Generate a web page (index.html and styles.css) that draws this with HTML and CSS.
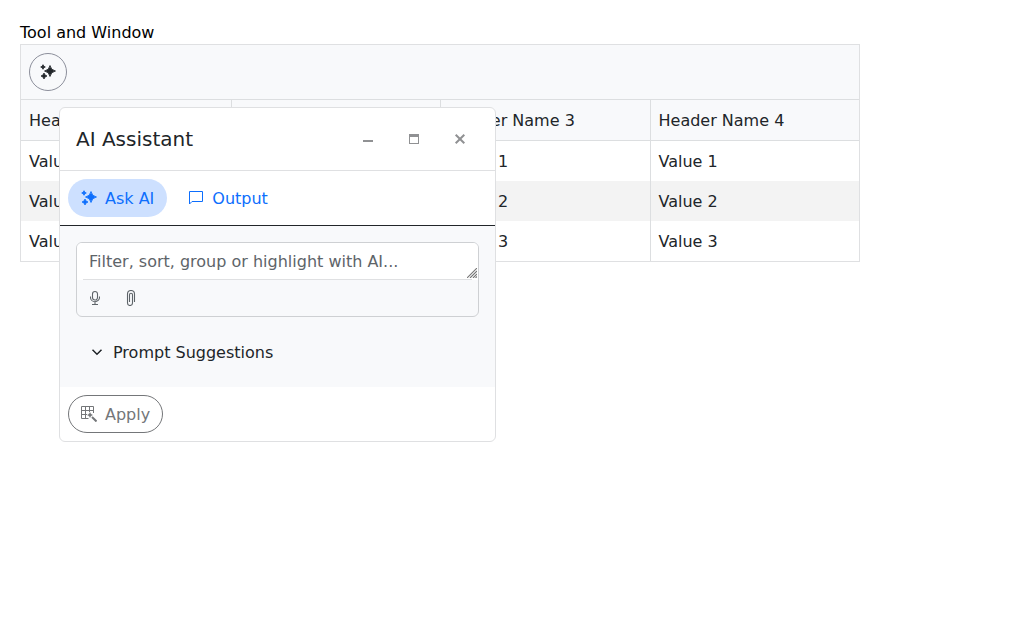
FILE: index.html
```html
<!DOCTYPE html>
<html lang="en">
<head>
<meta charset="utf-8">
<title>Tool and Window</title>
<link rel="stylesheet" href="styles.css">
</head>
<body>
<svg class="defs" width="0" height="0" aria-hidden="true">
  <symbol id="sparkles" viewBox="0 0 16 16"><path d="M10 1.5Q10.9 6.1 15.5 7Q10.9 7.9 10 12.5Q9.1 7.9 4.5 7Q9.1 6.1 10 1.5ZM3 .7Q3.4 2.6 5.3 3Q3.4 3.4 3 5.3Q2.6 3.4 .7 3Q2.6 2.6 3 .7ZM4 9Q4.5 11.5 7 12Q4.5 12.5 4 15Q3.5 12.5 1 12Q3.5 11.5 4 9Z" fill="currentColor" stroke="currentColor" stroke-width=".8"/></symbol>
</svg>
<div class="heading">Tool and Window</div>
<div class="grid">
  <div class="toolbar"><button class="btn btn-round" aria-label="AI Assistant"><svg class="icon"><use href="#sparkles"/></svg></button></div>
  <div class="row row-header"><div>Header Name 1</div><div>Header Name 2</div><div>Header Name 3</div><div>Header Name 4</div></div>
  <div class="row"><div>Value 1</div><div>Value 1</div><div>Value 1</div><div>Value 1</div></div>
  <div class="row row-alt"><div>Value 2</div><div>Value 2</div><div>Value 2</div><div>Value 2</div></div>
  <div class="row"><div>Value 3</div><div>Value 3</div><div>Value 3</div><div>Value 3</div></div>
</div>
<div class="window">
  <div class="titlebar">
    <div class="title">AI Assistant</div>
    <div class="actions">
      <svg class="icon" viewBox="0 0 16 16"><path d="M3 9h10v2H3z" fill="currentColor"/></svg>
      <svg class="icon" viewBox="0 0 16 16"><path d="M3 3h10v10H3zM4 6v6h8V6z" fill="currentColor" fill-rule="evenodd"/></svg>
      <svg class="icon" viewBox="0 0 16 16"><path d="M3.7 3.7l8.6 8.6M12.3 3.7l-8.6 8.6" stroke="currentColor" stroke-width="2"/></svg>
    </div>
  </div>
  <div class="tabs">
    <button class="btn btn-active"><svg class="icon"><use href="#sparkles"/></svg>Ask AI</button>
    <button class="btn btn-flat"><svg class="icon" viewBox="0 0 16 16"><path d="M1.5 14V1.5h13v10H4z" fill="none" stroke="currentColor"/></svg>Output</button>
  </div>
  <div class="content">
    <div class="prompt">
      <div class="prompt-text">Filter, sort, group or highlight with AI...
        <svg class="grip" viewBox="0 0 10 10"><path d="M0 10L10 0M3 10L10 3M6 10L10 6M8.5 10L10 8.5" stroke="#777" stroke-width="1.1"/></svg>
      </div>
      <div class="prompt-tools">
        <svg class="icon" viewBox="0 0 16 16"><path d="M5.5 4a2.5 2.5 0 0 1 5 0v3.5a2.5 2.5 0 0 1-5 0zM3.5 6.5v1a4.5 4.2 0 0 0 9 0v-1M8 11.7v2.8M5 14.5h6" fill="none" stroke="currentColor" stroke-width="1.1"/></svg>
        <svg class="icon" viewBox="0 0 16 16"><path d="M11.5 12V4a3.5 3.5 0 0 0-7 0v9a2.5 2.5 0 0 0 5 0V4.7a1.5 1.5 0 0 0-3 0V12" fill="none" stroke="currentColor" stroke-width="1.1"/></svg>
      </div>
    </div>
    <div class="suggestions"><svg class="icon" viewBox="0 0 16 16"><path d="M3.5 5.8L8 10.2l4.5-4.4" fill="none" stroke="currentColor" stroke-width="1.5"/></svg>Prompt Suggestions</div>
  </div>
  <div class="footer">
    <button class="btn btn-apply"><svg class="icon" viewBox="0 0 16 16"><path d="M7.5 12.5H.5V.5h12V7M.5 4.5h12M.5 8.5H6M4.5.5v12M8.5.5V6" fill="none" stroke="currentColor"/><path d="M11 11l4.5 4.5" stroke="currentColor" stroke-width="2"/><path d="M9 6.5L9.9 8.1L11.5 9L9.9 9.9L9 11.5L8.1 9.9L6.5 9L8.1 8.1Z" fill="currentColor" stroke="currentColor" stroke-width=".4"/></svg>Apply</button>
  </div>
</div>
</body>
</html>
```

FILE: styles.css
```css
* { box-sizing: border-box; }
body { margin: 0; padding: 20px; font: 16px/25px "DejaVu Sans", sans-serif; color: #212529; background: #fff; }
.defs { position: absolute; }
.heading { height: 24px; color: #000; }
.icon { display: block; width: 16px; height: 16px; flex: none; }
.btn { display: inline-flex; align-items: center; gap: 8px; height: 38px; padding: 0 12px; border: 1px solid transparent; border-radius: 19px; background: none; color: inherit; font: inherit; white-space: nowrap; }
.btn-round { width: 38px; padding: 0; justify-content: center; border-color: #8c8f9b; }
.btn-active { background: #cde0ff; color: #0d6efd; }
.btn-flat { color: #0d6efd; }
.btn-apply { color: #747679; border-color: #747679; }
.grid { width: 840px; border: 1px solid #dfe0e2; }
.toolbar { height: 55px; padding: 8px; background: #f8f9fb; border-bottom: 1px solid #dcdee0; }
.row { display: grid; grid-template-columns: repeat(4, 1fr); height: 40px; }
.row > div { height: 40px; padding: 8px 8px 7px; border-left: 1px solid #dcdee0; }
.row > div:first-child { border-left: 0; }
.row-header { height: 41px; background: #f8f9fb; border-bottom: 1px solid #dcdee0; }
.row-alt { background: #f3f3f3; }
.window { position: absolute; left: 59px; top: 107px; width: 437px; height: 335px; border: 1px solid #dfe0e2; border-radius: 6px; background: #fff; overflow: hidden; }
.titlebar { display: flex; align-items: center; justify-content: space-between; height: 63px; padding: 0 27px 0 16px; border-bottom: 1px solid #dfe0e2; }
.title { font-size: 20px; line-height: 25px; }
.actions { display: flex; gap: 30px; color: #909193; }
.tabs { display: flex; gap: 8px; height: 55px; padding: 8px; border-bottom: 1px solid #212529; }
.content { height: 161px; padding: 16px; background: #f8f9fb; }
.prompt { height: 75px; border: 1px solid #ced0d3; border-radius: 6px; overflow: hidden; color: #5e6469; }
.prompt-text { position: relative; height: 37px; padding: 6px 12px; background: #fff; }
.prompt-text::after { content: ""; position: absolute; left: 6px; right: 6px; bottom: 0; height: 1px; background: #dfe0e2; }
.grip { position: absolute; right: 1px; bottom: 2px; width: 10px; height: 10px; }
.prompt-tools { display: flex; gap: 20px; padding: 10px; }
.suggestions { display: flex; align-items: flex-start; gap: 8px; height: 25px; margin-top: 23px; padding-left: 13px; }
.suggestions .icon { margin-top: 4px; }
.footer { padding: 8px; }
```
